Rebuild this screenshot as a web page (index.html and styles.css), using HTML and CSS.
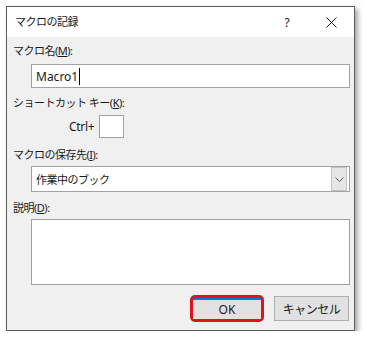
FILE: index.html
```html
<!DOCTYPE html>
<html lang="ja">
<head>
    <meta charset="UTF-8">
    <title>マクロの記録</title>
    <link rel="stylesheet" href="styles.css">
</head>
<body>
    <div class="dialog">
        <div class="titlebar">
            <span class="title">マクロの記録</span>
            <span class="tb-btn help">?</span>
            <span class="tb-btn close">
                <svg width="11" height="11" viewBox="0 0 11 11">
                    <path d="M0.5 0.5 L10.5 10.5 M10.5 0.5 L0.5 10.5" stroke="#1a1a1a" stroke-width="1" fill="none"/>
                </svg>
            </span>
        </div>

        <div class="content">
            <div class="label first">マクロ名(<u>M</u>):</div>
            <div class="field name-field">Macro1<span class="caret"></span></div>

            <div class="label shortcut-label">ショートカット キー(<u>K</u>):</div>
            <div class="ctrl-row">
                <span class="ctrl-text">Ctrl+</span>
                <span class="key-box"></span>
            </div>

            <div class="label store-label">マクロの保存先(<u>I</u>):</div>
            <div class="field combo">
                <span class="combo-text">作業中のブック</span>
                <span class="combo-btn">
                    <svg width="9" height="5" viewBox="0 0 9 5">
                        <path d="M0.5 0.5 L4.5 4.5 L8.5 0.5" stroke="#555" stroke-width="1" fill="none"/>
                    </svg>
                </span>
            </div>

            <div class="label desc-label">説明(<u>D</u>):</div>
            <div class="field desc"></div>

            <div class="buttons">
                <div class="highlight">
                    <button class="btn ok">OK</button>
                </div>
                <button class="btn cancel">キャンセル</button>
            </div>
        </div>
    </div>
</body>
</html>
```

FILE: styles.css
```css
:root {
    --panel: #f0f0f0;
    --field-border: #a2a2a2;
    --frame: #5c5c5c;
    --text: #1a1a1a;
}

* {
    box-sizing: border-box;
    margin: 0;
    padding: 0;
}

body {
    font-family: "Noto Sans", "Noto Sans CJK JP", sans-serif;
    font-size: 11px;
    color: var(--text);
    background: #ffffff;
}

.dialog {
    margin: 6px 0 0 6px;
    width: 349px;
    height: 325px;
    border: 1px solid var(--frame);
    background: var(--panel);
    box-shadow: 3px 3px 5px rgba(0, 0, 0, 0.35);
}

.titlebar {
    height: 30px;
    background: #ffffff;
    display: flex;
    align-items: center;
    padding-left: 8px;
}

.title {
    letter-spacing: -0.5px;
    line-height: 16px;
}

.tb-btn {
    height: 30px;
    display: flex;
    align-items: center;
    justify-content: center;
}

.help {
    margin-left: auto;
    width: 44px;
    font-size: 12px;
}

.close {
    width: 45px;
}

.content {
    padding: 0 4px 0 6px;
}

.label {
    line-height: 16px;
    letter-spacing: -0.5px;
    height: 16px;
}

.first {
    margin-top: 6px;
}

.field {
    margin-left: 18px;
    background: #ffffff;
    border: 1px solid var(--field-border);
}

.name-field {
    margin-top: 5px;
    height: 24px;
    padding-left: 4px;
    display: flex;
    align-items: center;
    font-size: 12px;
}

.caret {
    display: inline-block;
    width: 1px;
    height: 17px;
    background: #000000;
    margin-left: 1px;
}

.shortcut-label {
    margin-top: 7px;
}

.ctrl-row {
    margin-top: 4px;
    height: 23px;
    display: flex;
    align-items: center;
    gap: 5px;
    padding-left: 56px;
}

.ctrl-text {
    font-size: 12px;
    letter-spacing: -0.3px;
}

.key-box {
    width: 25px;
    height: 23px;
    background: #ffffff;
    border: 1px solid var(--field-border);
}

.store-label {
    margin-top: 9px;
}

.combo {
    margin-top: 3px;
    height: 26px;
    display: flex;
    align-items: center;
    padding: 0 2px 0 4px;
}

.combo-text {
    letter-spacing: -0.5px;
}

.combo-btn {
    margin-left: auto;
    width: 16px;
    height: 24px;
    background: #e6e6e6;
    border: 1px solid #c4c4c4;
    display: flex;
    align-items: center;
    justify-content: center;
}

.desc-label {
    margin-top: 8px;
}

.desc {
    margin-top: 3px;
    height: 66px;
}

.buttons {
    margin-top: 10px;
    display: flex;
    justify-content: flex-end;
    align-items: center;
    gap: 10px;
    padding-right: 1px;
}

.highlight {
    width: 74px;
    height: 27px;
    border: 3px solid #e0131c;
    border-radius: 5px;
    display: flex;
}

.btn {
    font-family: inherit;
    font-size: 12px;
    color: var(--text);
    background: #e1e1e1;
    border: 1px solid #adadad;
}

.ok {
    width: 100%;
    height: 100%;
    border: none;
    border-top: 2px solid #0078d7;
}

.cancel {
    width: 75px;
    height: 25px;
    letter-spacing: -0.5px;
}
```
